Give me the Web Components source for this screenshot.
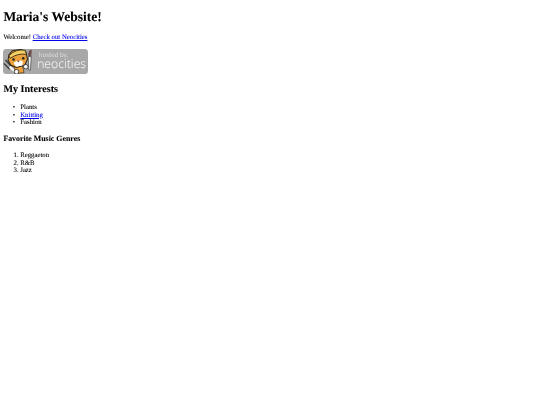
<!DOCTYPE html>
<html>
<head>
<meta charset="utf-8">
<title>Maria's Website!</title>
<style>
html, body { margin: 0; background: #fff; }
</style>
</head>
<body>
<site-page>
  <h-title level="1">Maria's Website!</h-title>
  <site-para>Welcome! <a-link>Check out Neocities</a-link></site-para>
  <neo-badge></neo-badge>
  <h-title level="2">My Interests</h-title>
  <site-list type="disc">
    <list-row>Plants</list-row>
    <list-row><a-link>Knitting</a-link></list-row>
    <list-row>Fashion</list-row>
  </site-list>
  <h-title level="3">Favorite Music Genres</h-title>
  <site-list type="decimal">
    <list-row>Reggaeton</list-row>
    <list-row>R&amp;B</list-row>
    <list-row>Jazz</list-row>
  </site-list>
</site-page>
<script>
function shadow(el, html) {
  el.attachShadow({mode: 'open'}).innerHTML = html;
}

// the reference is a 1280px wide page scaled down to 540px, so sizes below are in 1280 space
class SitePage extends HTMLElement {
  constructor() {
    super();
    shadow(this, `<style>
      :host { display: block; zoom: 0.421875; margin: 8px; color: #000;
        font: 16px/18.4px "Liberation Serif", "Times New Roman", serif;
        text-rendering: geometricPrecision; -webkit-text-stroke: 0.2px; filter: blur(0.5px); }
    </style><slot></slot>`);
  }
}

class HTitle extends HTMLElement {
  constructor() {
    super();
    const sizes = {1: [32, 37, 21.44], 2: [24, 27.6, 19.92], 3: [18.72, 21, 18.72]};
    const s = sizes[this.getAttribute('level')];
    shadow(this, `<style>
      :host { display: block; font-size: ${s[0]}px; line-height: ${s[1]}px; font-weight: bold;
        margin: ${s[2]}px 0; }
    </style><slot></slot>`);
  }
}

class SitePara extends HTMLElement {
  constructor() {
    super();
    shadow(this, `<style>:host { display: block; margin: 22.5px 0 16px; }</style><slot></slot>`);
  }
}

class ALink extends HTMLElement {
  constructor() {
    super();
    shadow(this, `<style>:host { color: #0000ee; text-decoration: underline; cursor: pointer; }</style><slot></slot>`);
  }
}

class NeoBadge extends HTMLElement {
  constructor() {
    super();
    // margin-bottom stands in for the gap under an inline image
    shadow(this, `<style>
      :host { display: block; position: relative; width: 200px; height: 60px; margin: 16px 0 23.5px;
        border-radius: 8px; background: #a8a8a8; color: #fff; -webkit-text-stroke: 0; }
      svg { position: absolute; left: 0; top: 0; }
      span { position: absolute; white-space: nowrap; }
      .by { left: 84px; top: 11px; font: 15.5px/13px "Lato", sans-serif; color: #dcdcdc; }
      .name { left: 80px; top: 24px; font: 300 29px/24px "Open Sans", sans-serif; }
    </style>
    <svg width="80" height="60" viewBox="0 0 80 60">
      <path d="M60 10 Q62 2 68 2 L67 18 L60 18 Z" fill="#6e4a4a"/>
      <path d="M60 18 L67 18 L65 50 L61 50 Z" fill="#f4f4f4" stroke="#333" stroke-width="1.500"/>
      <path d="M6 26 L24 46 M15 22 L28 38 M2 34 L16 48" stroke="#333" stroke-width="3" fill="none"/>
      <path d="M16 42 L30 54" stroke="#f4f4f4" stroke-width="6"/>
      <path d="M26 42 L46 40 L50 56 L30 58 Z" fill="#eba23a" stroke="#33261a" stroke-width="1.500"/>
      <path d="M14 14 L22 4 L42 1 L54 6 L58 24 L52 38 L32 44 L18 38 L12 26 Z" fill="#eba23a" stroke="#33261a" stroke-width="2.500"/>
      <path d="M14 16 Q30 -1 52 3 L56 13 Q36 9 17 22 Z" fill="#f2d062" stroke="#33261a" stroke-width="2"/>
      <path d="M25 33 Q36 24 47 29 L46 39 L31 42 Z" fill="#fff"/>
      <circle cx="25" cy="25" r="3" fill="#222"/><circle cx="48" cy="22" r="3" fill="#222"/>
      <path d="M33 28 L39 27 L37 32 Z" fill="#7a2a20"/>
      <circle cx="32" cy="54" r="5.500" fill="#f4f4f4" stroke="#333" stroke-width="2"/>
      <circle cx="54" cy="42" r="5.500" fill="#f4f4f4" stroke="#333" stroke-width="2"/>
    </svg>
    <span class="by">hosted by,</span><span class="name">neocities</span>`);
  }
}

class SiteList extends HTMLElement {
  constructor() {
    super();
    // string marker, the built-in disc sat too far left once zoomed
    const marker = this.getAttribute('type') == 'disc' ? '"\\2022\\00a0\\00a0\\00a0"' : 'decimal';
    shadow(this, `<style>
      :host { display: block; margin: 16px 0; padding-left: 40px; list-style-type: ${marker}; counter-reset: list-item; }
    </style><slot></slot>`);
  }
}

class ListRow extends HTMLElement {
  constructor() {
    super();
    shadow(this, `<style>:host { display: list-item; }</style><slot></slot>`);
  }
}

customElements.define('site-page', SitePage);
customElements.define('h-title', HTitle);
customElements.define('site-para', SitePara);
customElements.define('a-link', ALink);
customElements.define('neo-badge', NeoBadge);
customElements.define('site-list', SiteList);
customElements.define('list-row', ListRow);
</script>
</body>
</html>
